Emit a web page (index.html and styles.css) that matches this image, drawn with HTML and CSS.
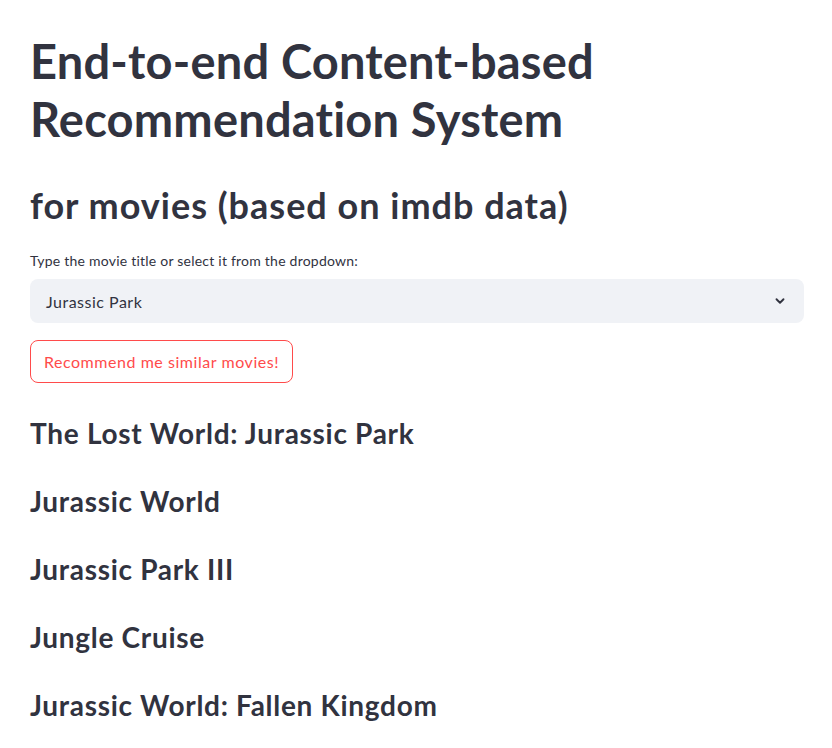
FILE: index.html
```html
<!DOCTYPE html>
<html lang="en">
<head>
<meta charset="utf-8">
<title>Movie Recommender</title>
<link rel="stylesheet" href="styles.css">
</head>
<body>
<main class="main">
  <h1 class="title">End-to-end Content-based Recommendation System</h1>
  <h2 class="subtitle">for movies (based on imdb data)</h2>
  <div class="field">
    <label class="field-label">Type the movie title or select it from the dropdown:</label>
    <div class="select">
      <span class="select-value">Jurassic Park</span>
      <svg class="chevron" width="14" height="14" viewBox="0 0 24 24"><path d="M6 9l6 6 6-6" fill="none" stroke="#31333f" stroke-width="3.2" stroke-linecap="round" stroke-linejoin="round"/></svg>
    </div>
  </div>
  <button class="btn">Recommend me similar movies!</button>
  <div class="results">
    <h3 class="result">The Lost World: Jurassic Park</h3>
    <h3 class="result">Jurassic World</h3>
    <h3 class="result">Jurassic Park III</h3>
    <h3 class="result">Jungle Cruise</h3>
    <h3 class="result">Jurassic World: Fallen Kingdom</h3>
  </div>
</main>
</body>
</html>
```

FILE: styles.css
```css
* { box-sizing: border-box; }
body {
  margin: 0;
  background: #ffffff;
  color: #31333f;
  font-family: "Lato", "Noto Sans", sans-serif;
}
.main {
  padding: 32px 28px 0 30px;
  display: flex;
  flex-direction: column;
}
.title {
  margin: 0;
  font-size: 47px;
  line-height: 58px;
  font-weight: 700;
  letter-spacing: 0.2px;
}
.subtitle {
  margin: 36px 0 0;
  font-size: 36px;
  line-height: 43px;
  font-weight: 700;
  letter-spacing: 1px;
}
.field {
  margin-top: 24px;
  display: flex;
  flex-direction: column;
  gap: 8px;
}
.field-label {
  font-size: 14px;
  line-height: 20px;
  letter-spacing: 0.23px;
}
.select {
  height: 44px;
  background: #f0f2f6;
  border-radius: 8px;
  display: flex;
  align-items: center;
  justify-content: space-between;
  padding: 0 17px 0 16px;
  font-size: 16px;
  letter-spacing: 0.5px;
}
.chevron { display: block; }
.btn {
  align-self: flex-start;
  margin-top: 17px;
  height: 43px;
  width: 263px;
  padding: 0 12px;
  background: #fff;
  border: 1px solid #ff4b4b;
  border-radius: 8px;
  color: #ff4b4b;
  font-family: inherit;
  font-size: 16px;
  letter-spacing: 0.55px;
}
.results {
  margin-top: 33px;
  display: flex;
  flex-direction: column;
  gap: 34px;
}
.result {
  margin: 0;
  font-size: 28px;
  line-height: 34px;
  font-weight: 700;
  letter-spacing: 0.7px;
}
```
